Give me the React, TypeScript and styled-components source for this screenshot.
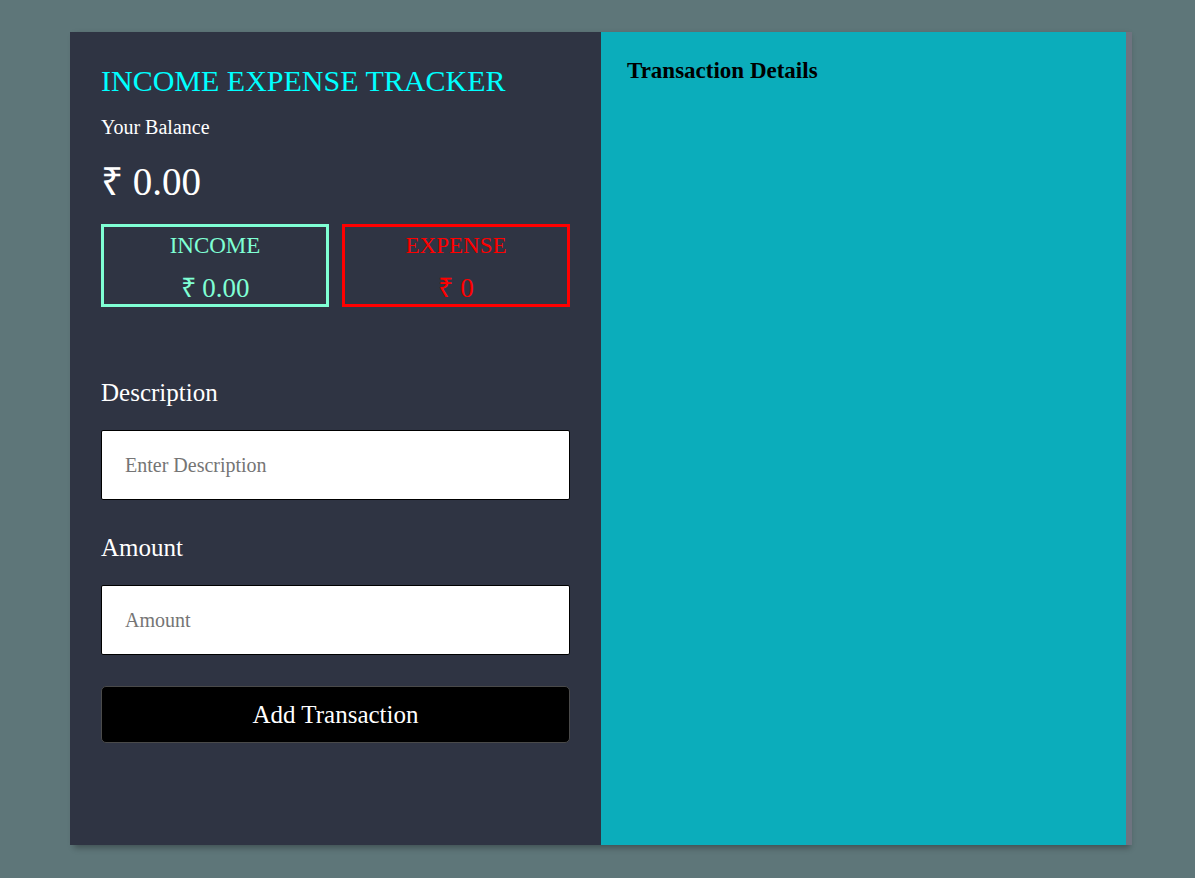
import React from "react";
import styled, { createGlobalStyle } from "styled-components";

const Global = createGlobalStyle`
  html, body { margin: 0; padding: 0; }
  body {
    background: #5e7679;
    font-family: "Liberation Serif", "Times New Roman", serif;
    min-height: 878px;
  }
  * { box-sizing: border-box; }
`;

const Page = styled.div`
  padding: 32px 69px 33px 70px;
`;

const Container = styled.div`
  display: grid;
  grid-template-columns: 531px 525px;
  height: 813px;
  width: 1056px;
  box-shadow: 6px 0 0 #6e7480, 4px 3px 6px rgba(0, 0, 0, 0.3);
`;

const LeftPanel = styled.section`
  background: #2f3443;
  padding: 32px 31px 0 31px;
  display: flex;
  flex-direction: column;
`;

const RightPanel = styled.section`
  background: #0badbb;
  padding: 25px 26px;
`;

const Title = styled.h1`
  margin: 0;
  font-size: 30px;
  font-weight: 400;
  color: #00ffff;
  line-height: 34px;
  white-space: nowrap;
`;

const BalanceLabel = styled.div`
  margin-top: 18px;
  font-size: 20px;
  color: #ffffff;
  line-height: 22px;
`;

const BalanceValue = styled.div`
  margin-top: 22px;
  font-size: 39px;
  color: #ffffff;
  line-height: 44px;
`;

const Cards = styled.div`
  margin-top: 20px;
  display: grid;
  grid-template-columns: 1fr 1fr;
  gap: 13px;
`;

const Card = styled.div<{ $color: string }>`
  border: 3px solid ${(p) => p.$color};
  color: ${(p) => p.$color};
  height: 83px;
  display: flex;
  flex-direction: column;
  align-items: center;
  padding-top: 5px;
`;

const CardTitle = styled.div`
  font-size: 23px;
  line-height: 28px;
`;

const CardValue = styled.div`
  margin-top: 13px;
  font-size: 27px;
  line-height: 30px;
`;

const Label = styled.label<{ $gap: number }>`
  display: block;
  margin-top: ${(p) => p.$gap}px;
  font-size: 25px;
  color: #ffffff;
  line-height: 28px;
`;

const Input = styled.input`
  display: block;
  margin-top: 23px;
  width: 469px;
  height: 70px;
  border: 1px solid #000;
  border-radius: 2px;
  background: #fff;
  padding: 0 23px;
  font-family: "Liberation Serif", "Times New Roman", serif;
  font-size: 20px;
  outline: none;
  &::placeholder { color: #757575; }
`;

const Button = styled.button`
  margin-top: 31px;
  width: 469px;
  height: 57px;
  background: #000;
  color: #fff;
  border: 1px solid #4a4a4a;
  border-radius: 5px;
  font-family: "Liberation Serif", "Times New Roman", serif;
  font-size: 25px;
  cursor: pointer;
`;

const DetailsTitle = styled.h2`
  margin: 0;
  font-size: 23px;
  font-weight: 700;
  color: #000;
  line-height: 28px;
`;

export default function App() {
  return (
    <>
      <Global />
      <Page>
        <Container>
          <LeftPanel>
            <Title>INCOME EXPENSE TRACKER</Title>
            <BalanceLabel>Your Balance</BalanceLabel>
            <BalanceValue>₹ 0.00</BalanceValue>
            <Cards>
              <Card $color="#7fffd4">
                <CardTitle>INCOME</CardTitle>
                <CardValue>₹ 0.00</CardValue>
              </Card>
              <Card $color="#ff0000">
                <CardTitle>EXPENSE</CardTitle>
                <CardValue>₹ 0</CardValue>
              </Card>
            </Cards>
            <Label $gap={72}>Description</Label>
            <Input placeholder="Enter Description" />
            <Label $gap={34}>Amount</Label>
            <Input placeholder="Amount" />
            <Button>Add Transaction</Button>
          </LeftPanel>
          <RightPanel>
            <DetailsTitle>Transaction Details</DetailsTitle>
          </RightPanel>
        </Container>
      </Page>
    </>
  );
}
